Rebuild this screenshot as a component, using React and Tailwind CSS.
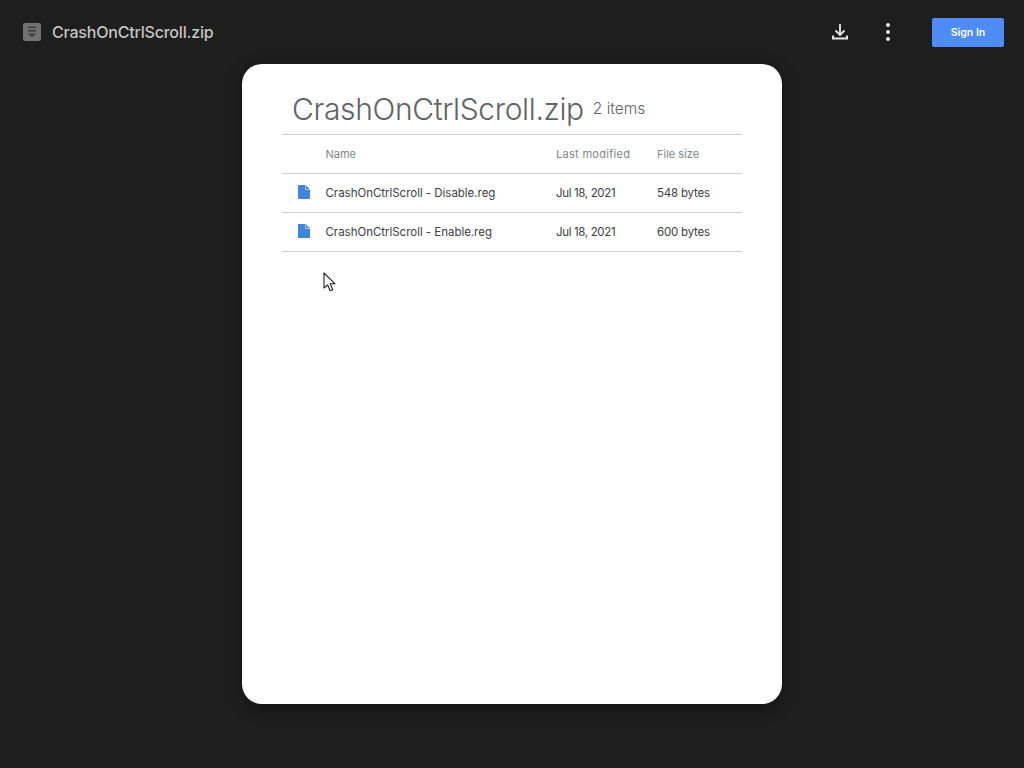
import React from "react";

const font = { fontFamily: "Inter, 'Open Sans', sans-serif" };

const files = [
  { name: "CrashOnCtrlScroll - Disable.reg", date: "Jul 18, 2021", size: "548 bytes" },
  { name: "CrashOnCtrlScroll - Enable.reg", date: "Jul 18, 2021", size: "600 bytes" },
];

function ZipIcon() {
  return (
    <svg width="18" height="18" viewBox="0 0 18 18" className="shrink-0">
      <rect width="18" height="18" rx="2" fill="#727272" />
      <path d="M5 3.5h8v1.8H5zM5 7h8v1.8H5z" fill="#3f3f3f" />
      <path d="M5 10.5h8l-4 4z" fill="#3f3f3f" />
    </svg>
  );
}

function FileIcon() {
  return (
    <svg width="12" height="14" viewBox="0 0 12 14" className="shrink-0">
      <path d="M1 0h6.5L12 4.5V13a1 1 0 0 1-1 1H1a1 1 0 0 1-1-1V1a1 1 0 0 1 1-1z" fill="#4285e0" />
      <path d="M7.5 0.5V4.5H11.5" fill="none" stroke="#cfe0f8" strokeWidth="0.8" />
    </svg>
  );
}

function Cursor() {
  return (
    <svg width="14" height="20" viewBox="0 0 14 20" className="absolute left-[81px] top-[208px]">
      <path d="M1 1v15l3.6-3.2 2.6 6 2.6-1.1-2.6-5.9H12z" fill="#fff" stroke="#222" strokeWidth="1.1" strokeLinejoin="round" />
    </svg>
  );
}

export default function App() {
  return (
    <div className="min-h-[768px] bg-[#1e1e1e] flex flex-col items-center overflow-hidden" style={font}>
      <header className="w-full h-[64px] flex items-center pl-[23px] pr-[20px]">
        <ZipIcon />
        <span className="ml-[11px] text-[16px] font-medium text-[#c4c4c4] tracking-[-0.2px]">CrashOnCtrlScroll.zip</span>
        <div className="ml-auto flex items-center">
          <svg width="20" height="20" viewBox="0 0 20 20" fill="none" stroke="#e8e8e8" strokeWidth="1.8">
            <path d="M10 2v11M5.5 8.5L10 13l4.5-4.5" />
            <path d="M3 13.5v3h14v-3" strokeWidth="2" />
          </svg>
          <div className="ml-[36px] mr-[-1px] flex flex-col gap-[3px]">
            <span className="block w-[4px] h-[4px] rounded-full bg-[#e8e8e8]" />
            <span className="block w-[4px] h-[4px] rounded-full bg-[#e8e8e8]" />
            <span className="block w-[4px] h-[4px] rounded-full bg-[#e8e8e8]" />
          </div>
          <button className="ml-[43px] w-[72px] h-[29px] pt-px rounded-[2px] bg-[#4d8bf5] text-white text-[10.5px] font-semibold">
            Sign In
          </button>
        </div>
      </header>

      <main className="relative w-[540px] h-[640px] bg-white rounded-[20px] px-[40px] shadow-[0_4px_16px_rgba(0,0,0,0.4)]">
        <div className="h-[71px] flex items-end pl-[10px] pb-[5px] border-b border-[#cfcfcf]">
          <h1 className="text-[30px] leading-[40px] font-light text-[#5f6368] tracking-[-0.35px]">CrashOnCtrlScroll.zip</h1>
          <span className="ml-[9px] mb-[9px] text-[15.5px] font-light text-[#5f6368]">2 items</span>
        </div>
        <div className="h-[39px] flex items-center border-b border-[#cfcfcf] text-[11px] text-[#80868b]">
          <span className="ml-[43.5px] w-[230.5px]">Name</span>
          <span className="w-[101px] tracking-[0.3px]">Last modified</span>
          <span>File size</span>
        </div>
        {files.map((f) => (
          <div key={f.name} className="h-[39px] flex items-center border-b border-[#cfcfcf] text-[11.5px] text-[#3c4043]">
            <span className="ml-[16px] w-[27.5px] -mt-[2px]"><FileIcon /></span>
            <span className="w-[230.5px] pt-[2px] tracking-[-0.03px]">{f.name}</span>
            <span className="w-[101px] pt-[2px] tracking-[-0.35px]">{f.date}</span>
            <span className="pt-[2px] tracking-[-0.2px]">{f.size}</span>
          </div>
        ))}
        <Cursor />
      </main>
    </div>
  );
}
